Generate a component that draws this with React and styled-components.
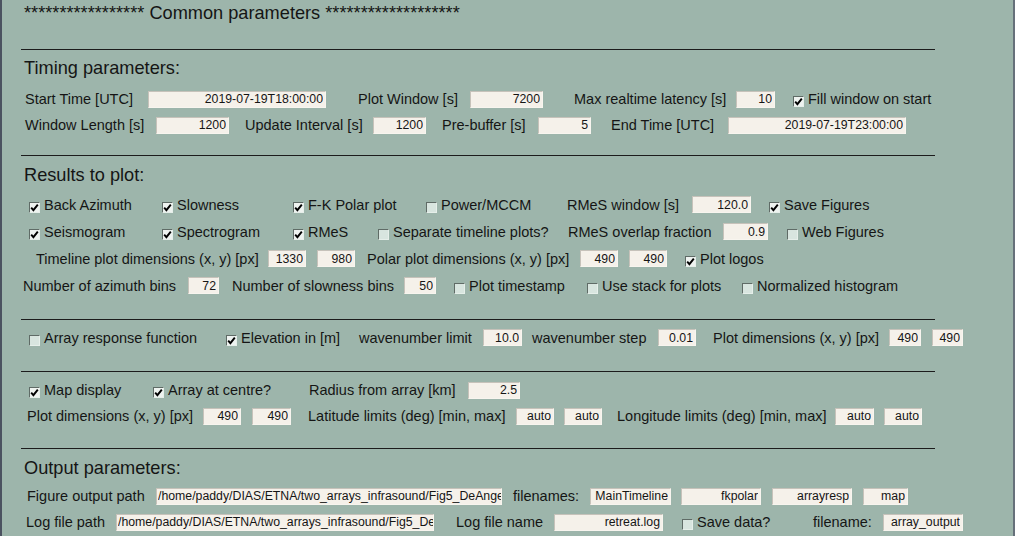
import React from 'react';
import styled, { createGlobalStyle } from 'styled-components';

const GlobalStyle = createGlobalStyle`
	html, body {
		margin: 0;
		padding: 0;
		background: #9db5ab;
		overflow: hidden;
	}
`;

const Window = styled.div`
	box-sizing: border-box;
	width: 1015px;
	height: 536px;
	background-color: #9db5ab;
	border-left: 2px solid #4b5260;
	border-right: 2px solid #66707a;
	font-family: 'Liberation Sans', Arial, sans-serif;
	color: #151515;
	display: flex;
	flex-direction: column;
`;

const Title = styled.div`
	height: 27px;
	line-height: 27px;
	padding-left: 22px;
	font-size: 18.2px;
	white-space: pre;
`;

const Rule = styled.div`
	flex: none;
	width: 914px;
	height: 1px;
	margin: ${(p) => p.$mt}px 0 0 19px;
	background-color: #1c1c1c;
`;

const Heading = styled.div`
	height: 25px;
	line-height: 25px;
	margin: ${(p) => p.$mt}px 0 0 22px;
	font-size: 18.2px;
`;

const Row = styled.div`
	flex: none;
	display: flex;
	align-items: center;
	height: ${(p) => p.$h || 26}px;
	margin-top: ${(p) => p.$mt || 0}px;
`;

const Label = styled.span`
	flex: none;
	width: ${(p) => p.$w}px;
	margin-left: ${(p) => p.$ml || 0}px;
	font-size: 14.5px;
	white-space: nowrap;
`;

const Entry = styled.input.attrs({ readOnly: true, type: 'text' })`
	flex: none;
	box-sizing: border-box;
	width: ${(p) => p.$w}px;
	height: 17px;
	margin: 0 0 0 ${(p) => p.$ml || 0}px;
	padding: 0 ${(p) => (p.$left ? 0 : 2)}px 0 ${(p) => (p.$left ? 1 : 2)}px;
	border: 1px solid;
	border-color: #c6c2ba #f8f5ef #f8f5ef #c6c2ba;
	background-color: #f5f1ea;
	color: #151515;
	font-family: 'Liberation Sans', Arial, sans-serif;
	font-size: 12.3px;
	text-align: ${(p) => (p.$left ? 'left' : 'right')};
	outline: none;
`;

const CheckItem = styled.label`
	flex: none;
	display: flex;
	align-items: center;
	gap: 4px;
	width: ${(p) => (p.$w ? `${p.$w}px` : 'auto')};
	margin-left: ${(p) => p.$ml || 0}px;
	font-size: 14.5px;
	white-space: nowrap;
`;

const Box = styled.span`
	flex: none;
	box-sizing: border-box;
	width: 11px;
	height: 11px;
	margin-top: 5px;
	display: flex;
	align-items: center;
	justify-content: center;
	border: 1px solid;
	border-color: #5f6b66 #e6efea #e6efea #5f6b66;
	background-color: ${(p) => (p.$on ? '#eef3f0' : '#d8e5df')};
`;

const Check = ({ on, w, ml, children }) => (
	<CheckItem $w={w} $ml={ml}>
		<Box $on={on}>
			{on && (
				<svg width="9" height="9" viewBox="0 0 9 9">
					<path d="M1.2 4.6 L3.4 7.2 L7.8 1.6" fill="none" stroke="#000" strokeWidth="1.9" />
				</svg>
			)}
		</Box>
		{children}
	</CheckItem>
);

const App = () => (
	<Window>
		<GlobalStyle />
		<Title>{'***************** Common parameters *******************'}</Title>

		<Rule $mt={22} />
		<Heading $mt={6}>Timing parameters:</Heading>
		<Row $mt={5}>
			<Label $ml={23} $w={123}>Start Time [UTC]</Label>
			<Entry $w={178} defaultValue="2019-07-19T18:00:00" />
			<Label $ml={32} $w={112}>Plot Window [s]</Label>
			<Entry $w={73} defaultValue="7200" />
			<Label $ml={31} $w={162}>Max realtime latency [s]</Label>
			<Entry $w={39} defaultValue="10" />
			<Check on ml={18}>Fill window on start</Check>
		</Row>
		<Row>
			<Label $ml={23} $w={131}>Window Length [s]</Label>
			<Entry $w={73} defaultValue="1200" />
			<Label $ml={16} $w={128}>Update Interval [s]</Label>
			<Entry $w={53} defaultValue="1200" />
			<Label $ml={16} $w={96}>Pre-buffer [s]</Label>
			<Entry $w={53} defaultValue="5" />
			<Label $ml={20} $w={117}>End Time [UTC]</Label>
			<Entry $w={178} defaultValue="2019-07-19T23:00:00" />
		</Row>

		<Rule $mt={17} />
		<Heading $mt={7}>Results to plot:</Heading>
		<Row $h={27} $mt={3}>
			<Check on ml={27} w={133}>Back Azimuth</Check>
			<Check on w={131}>Slowness</Check>
			<Check on w={133}>F-K Polar plot</Check>
			<Check w={141}>Power/MCCM</Check>
			<Label $w={125}>RMeS window [s]</Label>
			<Entry $w={59} defaultValue="120.0" />
			<Check on ml={18}>Save Figures</Check>
		</Row>
		<Row $h={27}>
			<Check on ml={27} w={133}>Seismogram</Check>
			<Check on w={131}>Spectrogram</Check>
			<Check on w={85}>RMeS</Check>
			<Check w={190}>Separate timeline plots?</Check>
			<Label $w={155}>RMeS overlap fraction</Label>
			<Entry $w={45} defaultValue="0.9" />
			<Check ml={19}>Web Figures</Check>
		</Row>
		<Row $h={27}>
			<Label $ml={34} $w={232}>Timeline plot dimensions (x, y) [px]</Label>
			<Entry $w={38} defaultValue="1330" />
			<Entry $ml={11} $w={38} defaultValue="980" />
			<Label $ml={12} $w={213}>Polar plot dimensions (x, y) [px]</Label>
			<Entry $w={38} defaultValue="490" />
			<Entry $ml={11} $w={38} defaultValue="490" />
			<Check on ml={18}>Plot logos</Check>
		</Row>
		<Row $h={27}>
			<Label $ml={21} $w={165}>Number of azimuth bins</Label>
			<Entry $w={31} defaultValue="72" />
			<Label $ml={13} $w={172}>Number of slowness bins</Label>
			<Entry $w={32} defaultValue="50" />
			<Check ml={18} w={133}>Plot timestamp</Check>
			<Check w={155}>Use stack for plots</Check>
			<Check>Normalized histogram</Check>
		</Row>

		<Rule $mt={20} />
		<Row $h={27} $mt={4}>
			<Check ml={27} w={197}>Array response function</Check>
			<Check on w={133}>Elevation in [m]</Check>
			<Label $w={124}>wavenumber limit</Label>
			<Entry $w={39} defaultValue="10.0" />
			<Label $ml={10} $w={126}>wavenumber step</Label>
			<Entry $w={38} defaultValue="0.01" />
			<Label $ml={17} $w={176}>Plot dimensions (x, y) [px]</Label>
			<Entry $w={32} defaultValue="490" />
			<Entry $ml={11} $w={31} defaultValue="490" />
		</Row>

		<Rule $mt={20} />
		<Row $mt={5}>
			<Check on ml={27} w={124}>Map display</Check>
			<Check on w={156}>Array at centre?</Check>
			<Label $w={159}>Radius from array [km]</Label>
			<Entry $w={52} defaultValue="2.5" />
		</Row>
		<Row>
			<Label $ml={25} $w={176}>Plot dimensions (x, y) [px]</Label>
			<Entry $w={38} defaultValue="490" />
			<Entry $ml={11} $w={39} defaultValue="490" />
			<Label $ml={17} $w={208}>Latitude limits (deg) [min, max]</Label>
			<Entry $w={38} defaultValue="auto" />
			<Entry $ml={10} $w={38} defaultValue="auto" />
			<Label $ml={15} $w={218}>Longitude limits (deg) [min, max]</Label>
			<Entry $w={39} defaultValue="auto" />
			<Entry $ml={10} $w={38} defaultValue="auto" />
		</Row>

		<Rule $mt={19} />
		<Heading $mt={7}>Output parameters:</Heading>
		<Row $mt={2}>
			<Label $ml={25} $w={129}>Figure output path</Label>
			<Entry $w={346} $left defaultValue="/home/paddy/DIAS/ETNA/two_arrays_infrasound/Fig5_DeAngelis" />
			<Label $ml={11} $w={77}>filenames:</Label>
			<Entry $w={81} defaultValue="MainTimeline" />
			<Entry $ml={10} $w={80} defaultValue="fkpolar" />
			<Entry $ml={11} $w={80} defaultValue="arrayresp" />
			<Entry $ml={11} $w={45} defaultValue="map" />
		</Row>
		<Row>
			<Label $ml={24} $w={90}>Log file path</Label>
			<Entry $w={318} $left defaultValue="/home/paddy/DIAS/ETNA/two_arrays_infrasound/Fig5_DeAngelis" />
			<Label $ml={22} $w={98}>Log file name</Label>
			<Entry $w={109} defaultValue="retreat.log" />
			<Check ml={19} w={131}>Save data?</Check>
			<Label $w={70}>filename:</Label>
			<Entry $w={80} defaultValue="array_output" />
		</Row>
	</Window>
);

export default App;
